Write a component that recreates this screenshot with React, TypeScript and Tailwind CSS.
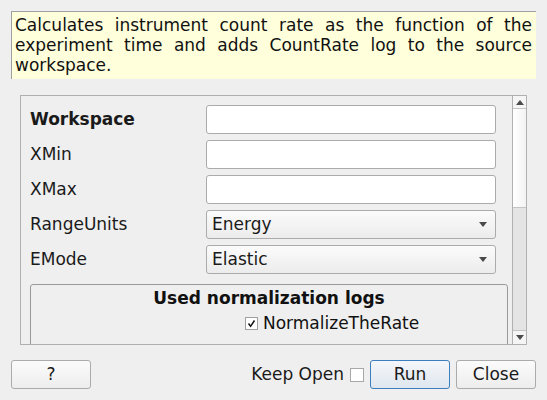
import React from "react";

const font = { fontFamily: '"DejaVu Sans", "Liberation Sans", sans-serif' };

function Arrow({ up = false }: { up?: boolean }) {
  return (
    <svg width="8" height="5" viewBox="0 0 8 5" className="block">
      {up ? <polygon points="0,5 8,5 4,0" fill="#4a4a4a" /> : <polygon points="0,0 8,0 4,5" fill="#4a4a4a" />}
    </svg>
  );
}

function TextInput() {
  return <div className="h-[29px] w-[290px] rounded-[3px] border border-[#ababab] bg-white" />;
}

function Combo({ value }: { value: string }) {
  return (
    <div className="flex h-[29px] w-[290px] items-center justify-between rounded-[3px] border border-[#ababab] bg-gradient-to-b from-[#fbfbfb] to-[#ececec] pl-[5px] pr-[8px] text-[17px] text-[#1a1a1a]">
      <span>{value}</span>
      <Arrow />
    </div>
  );
}

function Row({ label, bold = false, children }: { label: string; bold?: boolean; children: React.ReactNode }) {
  return (
    <div className="flex h-[29px] items-center">
      <div className={`w-[176px] text-[17px] text-[#1a1a1a] ${bold ? "font-bold" : ""}`}>{label}</div>
      {children}
    </div>
  );
}

function Button({ label, primary = false }: { label: string; primary?: boolean }) {
  return (
    <div
      className={`flex h-[29px] w-[80px] items-center justify-center rounded-[3px] border text-[17px] text-[#1a1a1a] ${
        primary
          ? "border-[#3b7fbf] bg-gradient-to-b from-[#f4f7fa] to-[#dfe6ee]"
          : "border-[#ababab] bg-gradient-to-b from-[#fbfbfb] to-[#ededed]"
      }`}
    >
      {label}
    </div>
  );
}

export default function App() {
  return (
    <div className="flex h-[400px] w-[547px] flex-col bg-[#efefef]" style={font}>
      <div className="ml-[11px] mt-[11px] h-[68px] w-[525px] border-l border-t border-[#a0a0a0] bg-[#ffffdc] pl-[3px] pr-[4px] pt-[3px] text-justify text-[17px] leading-[20px] text-[#111]">
        Calculates instrument count rate as the function of the experiment time and adds CountRate log to the source
        workspace.
      </div>

      <div className="ml-[20px] mt-[16px] flex h-[250px] w-[507px] border border-[#b0b0b0]">
        <div className="flex w-[491px] flex-col gap-[6px] overflow-hidden pl-[9px] pt-[9px]">
          <Row label="Workspace" bold>
            <TextInput />
          </Row>
          <Row label="XMin">
            <TextInput />
          </Row>
          <Row label="XMax">
            <TextInput />
          </Row>
          <Row label="RangeUnits">
            <Combo value="Energy" />
          </Row>
          <Row label="EMode">
            <Combo value="Elastic" />
          </Row>
          <div className="mt-[4px] h-[90px] w-[478px] shrink-0 rounded-[3px] border border-[#999999] pt-[3px]">
            <div className="text-center text-[17px] font-bold leading-[20px] text-[#111]">Used normalization logs</div>
            <div className="mt-[5px] flex items-center pl-[214px]">
              <div className="flex h-[13px] w-[13px] items-center justify-center border border-[#a0a0a0] bg-white">
                <svg width="9" height="9" viewBox="0 0 9 9">
                  <path d="M1.5 4.5 L3.6 7.3 L7.5 1.5" stroke="#111" strokeWidth="1.5" fill="none" />
                </svg>
              </div>
              <span className="ml-[5px] text-[17px] leading-[20px] text-[#111]">NormalizeTheRate</span>
            </div>
          </div>
        </div>
        <div className="flex w-[14px] flex-col border-l border-[#b0b0b0]">
          <div className="flex h-[13px] items-center justify-center border-b border-[#c4c4c4] bg-[#f5f5f5]">
            <Arrow up />
          </div>
          <div className="h-[99px] border-b border-[#c4c4c4] bg-gradient-to-r from-[#ffffff] to-[#f3f3f3]" />
          <div className="flex-1 bg-[#e4e4e4]" />
          <div className="flex h-[14px] items-center justify-center border-t border-[#c4c4c4] bg-[#f5f5f5]">
            <Arrow />
          </div>
        </div>
      </div>

      <div className="mt-[15px] flex items-center px-[11px]">
        <Button label="?" />
        <div className="ml-auto flex items-center">
          <span className="text-[17px] text-[#1a1a1a]">Keep Open</span>
          <div className="ml-[6px] h-[14px] w-[14px] border border-[#a8a8a8] bg-white" />
          <div className="ml-[6px]">
            <Button label="Run" primary />
          </div>
          <div className="ml-[6px]">
            <Button label="Close" />
          </div>
        </div>
      </div>
    </div>
  );
}
